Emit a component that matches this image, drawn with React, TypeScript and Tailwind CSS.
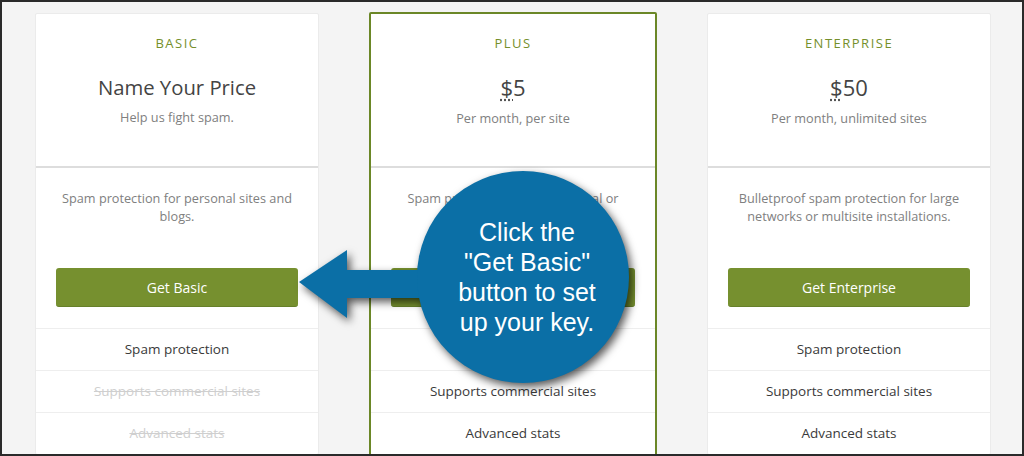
import React from 'react';

type Feature = { label: string; on: boolean };

interface Plan {
  name: string;
  price: React.ReactNode;
  sub: string;
  desc: string;
  cta: string;
  featured?: boolean;
  features: Feature[];
}

const Dollar = () => (
  <span className="underline decoration-dotted decoration-[#555] underline-offset-[3px]">$</span>
);

const plans: Plan[] = [
  {
    name: 'BASIC',
    price: 'Name Your Price',
    sub: 'Help us fight spam.',
    desc: 'Spam protection for personal sites and blogs.',
    cta: 'Get Basic',
    features: [
      { label: 'Spam protection', on: true },
      { label: 'Supports commercial sites', on: false },
      { label: 'Advanced stats', on: false },
    ],
  },
  {
    name: 'PLUS',
    price: (
      <span className="text-[22px]">
        <Dollar />5
      </span>
    ),
    sub: 'Per month, per site',
    desc: 'Spam protection for professional or commercial sites.',
    cta: 'Get Plus',
    featured: true,
    features: [
      { label: 'Spam protection', on: true },
      { label: 'Supports commercial sites', on: true },
      { label: 'Advanced stats', on: true },
    ],
  },
  {
    name: 'ENTERPRISE',
    price: (
      <span className="text-[22px]">
        <Dollar />50
      </span>
    ),
    sub: 'Per month, unlimited sites',
    desc: 'Bulletproof spam protection for large networks or multisite installations.',
    cta: 'Get Enterprise',
    features: [
      { label: 'Spam protection', on: true },
      { label: 'Supports commercial sites', on: true },
      { label: 'Advanced stats', on: true },
    ],
  },
];

function PlanCard({ plan }: { plan: Plan }) {
  return (
    <div
      className={
        plan.featured
          ? 'w-[288px] -mt-px bg-white border-2 border-[#6b8727] rounded-[2px] shrink-0'
          : 'w-[284px] bg-white border border-[#ebebeb] rounded-[2px] shrink-0'
      }
    >
      <div className="h-[154px] flex flex-col items-center border-b-2 border-[#dddddd] pt-[20px]">
        <div className="text-[13px] leading-[18px] tracking-[1.5px] text-[#758f2b]">{plan.name}</div>
        <div className="mt-[21px] text-[20.3px] leading-[28px] text-[#444]">{plan.price}</div>
        <div className="mt-[7px] text-[12.7px] leading-[18px] text-[#808080]">{plan.sub}</div>
      </div>
      <div className="px-[20px] pt-[21px] pb-[21px]">
        <p className="h-[36px] text-center text-[12.7px] leading-[18px] text-[#808080]">{plan.desc}</p>
        <button className="mt-[43px] w-full h-[39px] rounded-[3px] bg-[#76902f] border-b border-[#66802a] text-white text-[14px]">
          {plan.cta}
        </button>
      </div>
      {plan.features.map((f) => (
        <div
          key={f.label}
          className={`h-[42px] border-t border-[#eeeeee] flex items-center justify-center text-[13.5px] ${
            f.on ? 'text-[#3a3a3a]' : 'text-[#cfcfcf] line-through'
          }`}
        >
          {f.label}
        </div>
      ))}
    </div>
  );
}

export default function App() {
  return (
    <div
      className="relative w-[1024px] h-[456px] overflow-hidden bg-[#f4f4f4] border-2 border-[#2a2a2a]"
      style={{ fontFamily: '"Open Sans", "Noto Sans", sans-serif' }}
    >
      <div className="flex items-start gap-[50px] pl-[33px] pt-[11px]">
        {plans.map((p) => (
          <PlanCard key={p.name} plan={p} />
        ))}
      </div>

      {/* callout overlay */}
      <svg
        className="absolute -left-0.5 -top-0.5 pointer-events-none"
        width="1024"
        height="456"
        viewBox="0 0 1024 456"
        style={{ filter: 'drop-shadow(3px 4px 4px rgba(0,0,0,0.65))' }}
      >
        <g fill="#0b6fa6">
          <polygon points="299,282 347,250 347,270 450,270 450,298 347,298 347,318" />
          <circle cx="523" cy="277" r="106" />
        </g>
      </svg>
      <div
        className="absolute left-[415px] top-[215px] w-[220px] text-center text-white text-[25px] leading-[30px]"
        style={{ fontFamily: '"Liberation Sans", Arial, sans-serif' }}
      >
        Click the
        <br />
        "Get Basic"
        <br />
        button to set
        <br />
        up your key.
      </div>
    </div>
  );
}
